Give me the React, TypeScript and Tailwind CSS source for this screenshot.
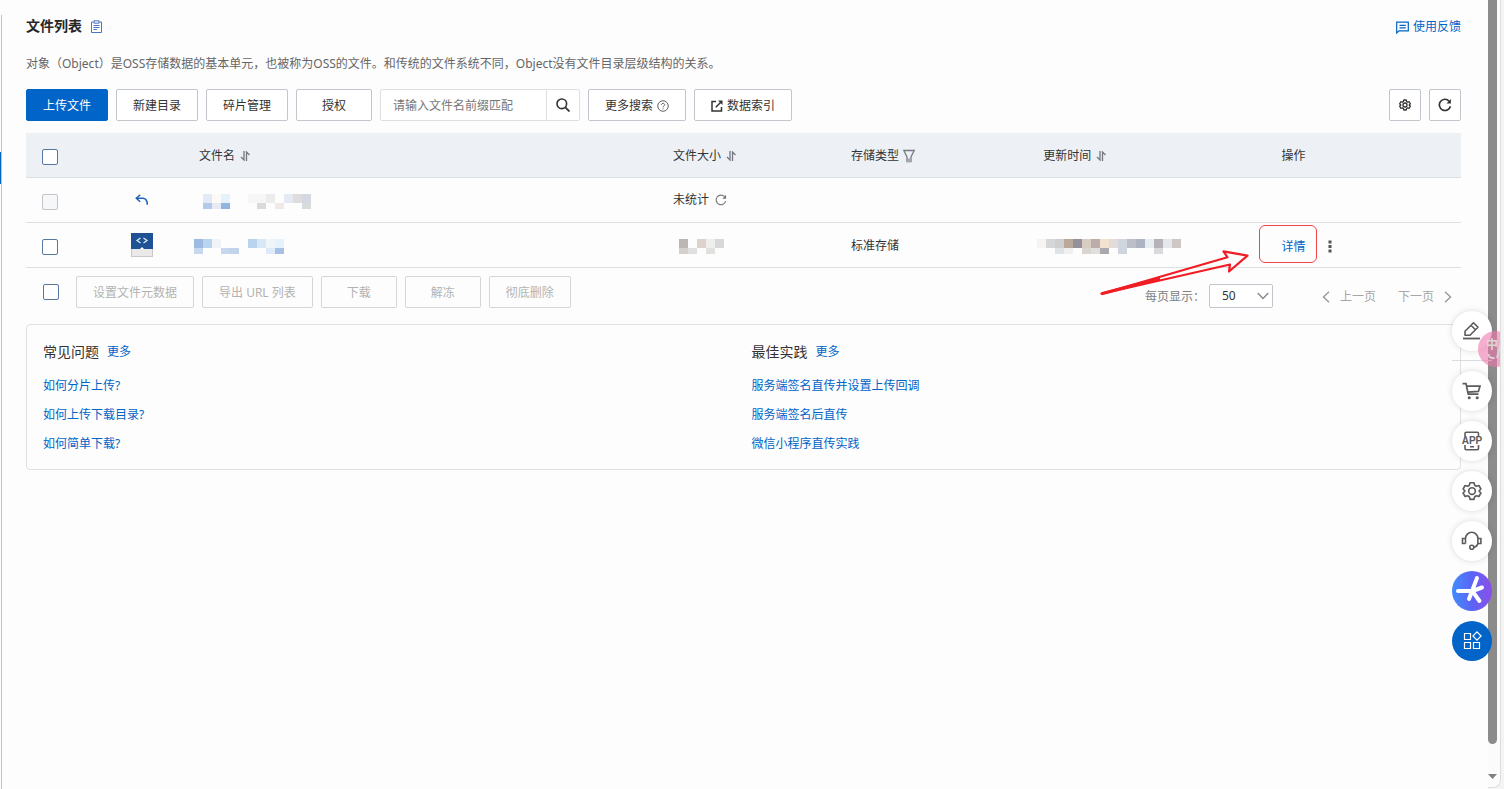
import type { ReactNode } from 'react';

const btn =
  'flex h-8 min-w-[76px] items-center justify-center gap-1 rounded-[2px] border border-[#c0c6cc] bg-white px-4 pt-0.5 whitespace-nowrap text-[#333]';
const btnDisabled =
  'flex h-8 min-w-[76px] items-center justify-center rounded-[2px] border border-[#d3d6da] px-4 pt-0.5 whitespace-nowrap text-[#b3b3b3]';
const iconBtn =
  'flex size-8 items-center justify-center rounded-[2px] border border-[#c0c6cc] bg-white text-[#333]';
const link = 'text-[#0064c8]';
const fab =
  'flex size-10 items-center justify-center rounded-full bg-white text-[#5c5c5c] shadow-[0_0_6px_rgba(0,0,0,0.14)]';

function Check({ label, disabled = false }: { label: string; disabled?: boolean }) {
  return (
    <input
      type="checkbox"
      aria-label={label}
      disabled={disabled}
      className="block size-4 appearance-none rounded-[2px] border border-[#56779f] bg-white checked:bg-[#0064c8] disabled:border-[#c3c5c9] disabled:bg-[#f6f7f9]"
    />
  );
}

function SortIcon() {
  return (
    <svg width="12" height="12" viewBox="0 0 12 12" fill="none" stroke="#74787e" strokeWidth="1.3" aria-hidden="true">
      <path d="M5 1V10L2 7" />
      <path d="M7.500 11V2L10.500 5" />
    </svg>
  );
}

function RefreshIcon({ size, width }: { size: number; width: number }) {
  return (
    <svg width={size} height={size} viewBox="0 0 14 14" fill="none" stroke="currentColor" strokeWidth={width} aria-hidden="true">
      <path d="M12.4 8.2A5.6 5.6 0 1 1 11.2 3.2" />
      <path d="M12.9 1V5.4H8.5Z" fill="currentColor" stroke="none" />
    </svg>
  );
}

function GearIcon({ size, width }: { size: number; width: number }) {
  return (
    <svg width={size} height={size} viewBox="0 0 24 24" fill="none" stroke="currentColor" strokeWidth={width} strokeLinejoin="round" aria-hidden="true">
      <path d="M9.6 2h4.8l.8 3.1 2 1.2 3.1-.9 2.4 4.2L20.4 12l2.3 2.4-2.4 4.2-3.1-.9-2 1.2-.8 3.1H9.6l-.8-3.1-2-1.2-3.1.9-2.4-4.2L3.6 12 1.300 9.600l2.400-4.200 3.100.9 2-1.200z" />
      <circle cx="12" cy="12" r="4" />
    </svg>
  );
}

type Cell = [col: number, row: number, color: string];

function Mosaic({ cells, cols }: { cells: Cell[]; cols: number }) {
  return (
    <svg width={cols * 9} height="16" shapeRendering="crispEdges" aria-hidden="true" className="block">
      {cells.map(([c, r, color]) => (
        <rect key={`${c}-${r}`} x={c * 9} y={r * 9} width="9" height={r ? 6 : 9} fill={color} />
      ))}
    </svg>
  );
}

const parentName: Cell[] = [
  [0, 0, '#e2ebf5'], [1, 0, '#fdf9f8'], [2, 0, '#e4f2fa'], [0, 1, '#b3cbe8'], [1, 1, '#e8eaf5'], [2, 1, '#8fb5e0'],
  [5, 0, '#f5f6f7'], [6, 0, '#f5f6f7'], [7, 0, '#ececec'], [9, 0, '#e3eaf4'], [10, 0, '#dfdcdd'], [11, 0, '#d4d9e1'],
  [6, 1, '#dcdad9'], [8, 1, '#f1e9e8'], [11, 1, '#dadbdd'],
];
const fileName: Cell[] = [
  [0, 0, '#9dbbe0'], [1, 0, '#b9d4ee'], [2, 0, '#f1f3f6'], [0, 1, '#c6d8ee'], [3, 1, '#c5d8ee'], [4, 1, '#c3d3ea'],
  [6, 0, '#b9d4ee'], [7, 0, '#d9e8f6'], [8, 0, '#f0f5fa'], [9, 0, '#e6f2fb'], [8, 1, '#dceafa'], [9, 1, '#a8c1e2'],
];
const fileSize: Cell[] = [
  [0, 0, '#bcb7b4'], [2, 0, '#dcd3ce'], [3, 0, '#eeeeec'], [4, 0, '#d8d8d9'], [0, 1, '#d6d0cd'], [1, 1, '#e0e0e1'], [3, 1, '#e2e1dd'],
];
const timeTop = ['#f6f3f1', '#d5d6d8', '#cfcfd2', '#b8a99b', '#949298', '#d8cdc3', '#bcadab', '#f2e2d0', '#e2dbda', '#cfd6de', '#bdbfc6', '#adb3c1', '#e8edf0', '#b5b3b9', '#e5e7ec', '#cdc8c3'];
const fileTime: Cell[] = [
  ...timeTop.map((c, i): Cell => [i, 0, c]),
  [2, 1, '#e0e3e6'], [3, 1, '#f0f0f1'], [5, 1, '#d9d5d0'], [6, 1, '#e2dfdd'], [7, 1, '#aaa9af'], [9, 1, '#cfd5dc'], [13, 1, '#d9d9de'],
];

function Th({ children, icon, className = '' }: { children: ReactNode; icon?: ReactNode; className?: string }) {
  return (
    <th scope="col" className={`border-b border-[#dcdfe3] px-4 pt-0.5 text-left font-normal ${className}`}>
      <span className="flex items-center gap-1">
        {children}
        {icon}
      </span>
    </th>
  );
}

function Td({ children, className = '' }: { children?: ReactNode; className?: string }) {
  return <td className={`border-b border-[#dedfe1] px-4 ${className}`}>{children}</td>;
}

function FileTable() {
  return (
    <table className="mt-3 w-full table-fixed border-separate border-spacing-0">
      <thead>
        <tr className="h-[45px] bg-[#edf1f6]">
          <th scope="col" className="w-[89px] border-b border-[#dcdfe3] px-4 pt-1">
            <Check label="全选" />
          </th>
          <th aria-label="类型" className="w-[68px] border-b border-[#dcdfe3]" />
          <Th icon={<SortIcon />} className="w-[33.03%]">文件名</Th>
          <Th icon={<SortIcon />} className="w-[12.4%]">文件大小</Th>
          <Th
            className="w-[13.4%]"
            icon={
              <svg width="12" height="14" viewBox="0 0 12 14" fill="none" stroke="#777b80" strokeWidth="1.3" aria-hidden="true">
                <path d="M0.8 1.500H11.200L8 8V12.500H4V8Z" />
                <path d="M4 9.500H8V13H4Z" fill="#a3a6aa" stroke="none" />
              </svg>
            }
          >
            存储类型
          </Th>
          <Th icon={<SortIcon />} className="w-[16.6%]">更新时间</Th>
          <Th>操作</Th>
        </tr>
      </thead>
      <tbody>
        <tr className="h-[45px]">
          <Td className="pt-1"><Check label="上级目录" disabled /></Td>
          <Td>
            <button type="button" aria-label="返回上级目录" className="ml-1 block text-[#1f63b8]">
              <svg width="14" height="12" viewBox="0 0 14 12" fill="none" stroke="currentColor" strokeWidth="1.5" aria-hidden="true">
                <path d="M5.200 0.800L1.300 4.300L5.200 7.800" />
                <path d="M1.300 4.300H7.500C10.500 4.300 12.300 6.400 12.300 10.800" />
              </svg>
            </button>
          </Td>
          <Td><div className="pt-1 pl-1"><Mosaic cells={parentName} cols={12} /></div></Td>
          <Td>
            <span className="flex items-center gap-1.5">
              未统计
              <button type="button" aria-label="统计" className="text-[#777]"><RefreshIcon size={12} width={1.3} /></button>
            </span>
          </Td>
          <Td />
          <Td />
          <Td />
        </tr>
        <tr className="h-[45px]">
          <Td className="pt-1"><Check label="选择文件" /></Td>
          <Td>
            <svg width="22" height="24" viewBox="0 0 22 24" fill="none" aria-hidden="true" className="block">
              <path d="M0 16H22V24H0Z" fill="#c9c9c9" />
              <path d="M1 16H21V23H1Z" fill="#e9e9e9" />
              <path d="M0 0H22V16H0Z" fill="#1f5195" />
              <path d="M11 14L13 16H9Z" fill="#fff" />
              <path d="M9.500 5L6 7.500L9.500 10M12.500 5L16 7.500L12.500 10" stroke="#e8eef7" strokeWidth="1.2" />
            </svg>
          </Td>
          <Td><div className="-ml-[5px] pt-1"><Mosaic cells={fileName} cols={10} /></div></Td>
          <Td><div className="pt-1 pl-1.5"><Mosaic cells={fileSize} cols={5} /></div></Td>
          <Td className="pt-0.5">标准存储</Td>
          <Td><div className="-ml-1.5 pt-1"><Mosaic cells={fileTime} cols={16} /></div></Td>
          <Td className="relative">
            <span className="flex items-center gap-[23px] pt-1">
              <a href="#detail" className={link}>详情</a>
              <button type="button" aria-label="更多操作" className="text-[#555]">
                <svg width="4" height="14" viewBox="0 0 4 14" fill="currentColor" aria-hidden="true" className="block">
                  <path d="M0.500 0.500H3.500V3.500H0.500ZM0.500 5H3.500V8H0.500ZM0.500 9.500H3.500V12.500H0.500Z" />
                </svg>
              </button>
            </span>
            <span className="pointer-events-none absolute top-0.5 -left-1.5 h-[38px] w-[58px] rounded-md border border-[#f0454b]" />
            <svg width="150" height="50" viewBox="1100 248 150 50" fill="none" stroke="#f01d24" strokeWidth="2.200" strokeLinejoin="round" aria-hidden="true" className="pointer-events-none absolute top-[25px] -left-[165px]">
              <path d="M1101.500 293.700L1227.500 257.300L1223.500 251.300L1247.500 255.700L1229 271.500L1230 264.500Z" />
              <path d="M1101.500 293.700L1160 278.500" strokeWidth="3" />
            </svg>
          </Td>
        </tr>
      </tbody>
    </table>
  );
}

function Faq({ title, items }: { title: string; items: string[] }) {
  return (
    <section>
      <div className="flex items-center gap-2 leading-5">
        <h2 className="text-[14px]">{title}</h2>
        <a href="#more" className={link}>更多</a>
      </div>
      <ul className="mt-[9px] leading-[29px]">
        {items.map((t) => (
          <li key={t}><a href="#doc" className={link}>{t}</a></li>
        ))}
      </ul>
    </section>
  );
}

function FloatingTools() {
  return (
    <nav aria-label="快捷工具" className="absolute top-[311px] right-3 flex flex-col gap-2.5">
      <div className="flex flex-col">
        <button type="button" aria-label="反馈" className={fab}>
          <svg width="20" height="20" viewBox="0 0 20 20" fill="none" stroke="currentColor" strokeWidth="1.600" strokeLinejoin="round" aria-hidden="true">
            <path d="M3 14.200V10.300L11.500 1.800L16 6.300L8 14.200ZM9 4.300L13.500 8.800" />
            <path d="M1 17.500H18" strokeWidth="1.800" />
          </svg>
        </button>
        <div className="mt-[9px] h-px bg-[#d9dde2]" />
      </div>
      <button type="button" aria-label="购物车" className={fab}>
        <svg width="20" height="20" viewBox="0 0 20 20" fill="none" stroke="currentColor" strokeWidth="1.700" aria-hidden="true">
          <path d="M0.500 2.600H4L6.200 13.200H16.500M4.600 5.200H18L16.400 10.400L5.700 11.200" />
          <circle cx="7.200" cy="16.800" r="1.500" fill="currentColor" stroke="none" />
          <circle cx="15.200" cy="16.800" r="1.500" fill="currentColor" stroke="none" />
        </svg>
      </button>
      <button type="button" aria-label="APP" className={`${fab} relative`}>
        <svg width="20" height="20" viewBox="0 0 20 20" fill="none" stroke="currentColor" strokeWidth="1.600" aria-hidden="true">
          <path d="M3 5.500V2.500Q3 1.300 4.200 1.300H15.300Q16.500 1.300 16.500 2.500V5.500M3 14V17.500Q3 18.700 4.200 18.700H15.300Q16.500 18.700 16.500 17.500V14M8 15.800H12" />
        </svg>
        <span className="absolute inset-0 flex items-center justify-center font-['Liberation_Sans',sans-serif] text-[10px] font-bold">APP</span>
      </button>
      <button type="button" aria-label="设置" className={fab}><GearIcon size={20} width={1.9} /></button>
      <button type="button" aria-label="客服" className={fab}>
        <svg width="22" height="20" viewBox="0 0 22 20" fill="none" stroke="currentColor" strokeWidth="1.600" aria-hidden="true">
          <path d="M4.500 12.500V7.500A6.200 6.200 0 0 1 16.900 7.500V12.500Q16.300 15.300 13 16.300" />
          <path d="M4.500 7.500H1.500V12.500H4.500M16.900 7.500H19.900V12.500H16.900" />
          <circle cx="10.800" cy="16.300" r="2" />
        </svg>
      </button>
      <button type="button" aria-label="AI 助手" className="flex size-10 items-center justify-center rounded-full bg-linear-to-r from-[#3f8cfa] via-[#5a63f6] to-[#8a4ee8]">
        <svg width="32" height="32" viewBox="0 0 32 32" fill="none" stroke="#fff" strokeWidth="4" strokeLinecap="round" aria-hidden="true">
          <path d="M2 16H15M21 3L13 24M15 16.500L26 12.500M17 17L23.500 26" />
        </svg>
      </button>
      <button type="button" aria-label="全部应用" className="flex size-10 items-center justify-center rounded-full bg-[#0064c8]">
        <svg width="20" height="20" viewBox="0 0 20 20" fill="none" stroke="#fff" strokeWidth="1.200" aria-hidden="true">
          <path d="M2.500 2.500H8.500V8.500H2.500ZM2.500 11.500H8.500V17.500H2.500ZM11.500 11.500H17.500V17.500H11.500ZM15 0.900L19.100 5L15 9.100L10.900 5Z" />
        </svg>
      </button>
    </nav>
  );
}

export default function App() {
  return (
    <div className="relative flex min-h-screen bg-[#fdfdfd] font-['Noto_Sans','Noto_Sans_CJK_SC',sans-serif] text-[12px] leading-5 text-[#333]">
      <div className="relative w-0.5 shrink-0 pt-[15px]">
        <div className="ml-px h-full bg-[#bfc2c6]" />
        <div className="absolute top-[152px] left-0 h-8 w-px bg-[#0064c8]" />
      </div>

      <main className="min-w-0 flex-1 pt-4 pr-[27px] pl-6">
        <header className="flex h-5 items-center justify-between">
          <div className="flex items-center gap-2">
            <h1 className="text-[14px] font-bold text-[#262626]">文件列表</h1>
            <svg width="13" height="13" viewBox="0 0 13 13" fill="none" stroke="#4a74c4" aria-hidden="true">
              <path d="M4 2H1.500V12.500H11.500V2H9" />
              <path d="M4 0.800H9V3.200H4Z" />
              <path d="M3.500 5.500H9.500M3.500 7.500H9.500M3.500 9.500H7" />
            </svg>
          </div>
          <a href="#feedback" className={`flex items-center gap-1 pt-0.5 ${link}`}>
            <svg width="13" height="13" viewBox="0 0 13 13" fill="none" stroke="currentColor" strokeWidth="1.200" aria-hidden="true">
              <path d="M0.700 12V1.200H12.300V9.800H3Z" />
              <path d="M3.500 4.300H9.800M3.500 6.800H9.800" />
            </svg>
            使用反馈
          </a>
        </header>

        <p className="mt-[18px] text-[#666]">
          对象（Object）是OSS存储数据的基本单元，也被称为OSS的文件。和传统的文件系统不同，Object没有文件目录层级结构的关系。
        </p>

        <div className="mt-[15px] flex justify-between">
          <div className="flex gap-2">
            <button type="button" className="h-8 rounded-[2px] border border-[#0064c8] bg-[#0064c8] px-4 pt-0.5 whitespace-nowrap text-white">上传文件</button>
            <button type="button" className={btn}>新建目录</button>
            <button type="button" className={btn}>碎片管理</button>
            <button type="button" className={btn}>授权</button>
            <form className="flex h-8 w-[200px] rounded-[2px] border border-[#dedfe2] bg-white" onSubmit={(e) => e.preventDefault()}>
              <input
                type="text"
                aria-label="文件名前缀"
                placeholder="请输入文件名前缀匹配"
                className="min-w-0 flex-1 px-3 pt-0.5 outline-none placeholder:text-[#777]"
              />
              <button type="submit" aria-label="搜索" className="flex w-[33px] items-center justify-center border-l border-[#dedfe2] text-[#333]">
                <svg width="14" height="14" viewBox="0 0 14 14" fill="none" stroke="currentColor" strokeWidth="1.600" aria-hidden="true">
                  <circle cx="5.800" cy="5.800" r="4.800" />
                  <path d="M9.300 9.300L13.500 13.500" strokeWidth="1.800" />
                </svg>
              </button>
            </form>
            <button type="button" className={btn}>
              更多搜索
              <svg width="12" height="12" viewBox="0 0 13 13" fill="none" stroke="#555" aria-hidden="true">
                <circle cx="6.500" cy="6.500" r="5.700" />
                <path d="M4.700 5.300C4.700 3 8.300 3 8.300 5.200C8.300 6.400 6.500 6.400 6.500 7.900" />
                <path d="M6.500 8.900V10" />
              </svg>
            </button>
            <button type="button" className={btn}>
              <svg width="12" height="12" viewBox="0 0 12 12" fill="none" stroke="currentColor" strokeWidth="1.500" aria-hidden="true">
                <path d="M5 1.500H1V11H10.500V7" />
                <path d="M4.800 7.300L10 2" />
                <path d="M7 0.500H11.500V5Z" fill="currentColor" stroke="none" />
              </svg>
              数据索引
            </button>
          </div>
          <div className="flex gap-2">
            <button type="button" aria-label="列设置" className={iconBtn}><GearIcon size={12} width={2.6} /></button>
            <button type="button" aria-label="刷新" className={iconBtn}><RefreshIcon size={14} width={1.7} /></button>
          </div>
        </div>

        <FileTable />

        <div className="flex items-end justify-between pt-2">
          <div className="flex items-center gap-2">
            <div className="mr-[9px] ml-[17px]"><Check label="全选本页" /></div>
            <button type="button" disabled className={btnDisabled}>设置文件元数据</button>
            <button type="button" disabled className={btnDisabled}>导出 URL 列表</button>
            <button type="button" disabled className={btnDisabled}>下载</button>
            <button type="button" disabled className={btnDisabled}>解冻</button>
            <button type="button" disabled className={btnDisabled}>彻底删除</button>
          </div>
          <div className="flex h-6 items-center pr-[9px] text-[#a6a6a6]">
            <label htmlFor="page-size" className="mr-1 pt-0.5 text-[#808080]">每页显示：</label>
            <div className="relative">
              <select id="page-size" defaultValue="50" className="block h-6 w-16 appearance-none rounded-[2px] border border-[#c0c6cc] bg-white pl-3 text-[#333]">
                <option>20</option>
                <option>50</option>
                <option>100</option>
              </select>
              <svg width="12" height="8" viewBox="0 0 12 8" fill="none" stroke="#888" strokeWidth="1.400" aria-hidden="true" className="pointer-events-none absolute top-2 right-1">
                <path d="M0.700 1L6 6.500L11.300 1" />
              </svg>
            </div>
            <button type="button" disabled className="ml-[49px] flex items-center gap-2.5 pt-0.5">
              <svg width="8" height="12" viewBox="0 0 8 12" fill="none" stroke="#999" strokeWidth="1.400" aria-hidden="true"><path d="M7 0.700L1.500 6L7 11.300" /></svg>
              上一页
            </button>
            <button type="button" disabled className="ml-[22px] flex items-center gap-2.5 pt-0.5">
              下一页
              <svg width="8" height="12" viewBox="0 0 8 12" fill="none" stroke="#999" strokeWidth="1.400" aria-hidden="true"><path d="M1 0.700L6.500 6L1 11.300" /></svg>
            </button>
          </div>
        </div>

        <div className="mt-4 grid grid-cols-2 gap-4 rounded border border-[#dfe0e2] px-4 pt-[17px] pb-[11px]">
          <Faq title="常见问题" items={['如何分片上传?', '如何上传下载目录?', '如何简单下载?']} />
          <Faq title="最佳实践" items={['服务端签名直传并设置上传回调', '服务端签名后直传', '微信小程序直传实践']} />
        </div>
      </main>

      <div aria-hidden="true" className="flex w-4 shrink-0 bg-[#f4f4f4]">
        <div className="mb-px flex w-[13px] flex-col rounded-br-lg border-r border-b border-[#dedede] bg-[#fbfbfb]">
          <div className="w-[9px] flex-1 rounded-b-full bg-[#8b8b8b]" />
          <svg width="9" height="5" viewBox="0 0 9 5" fill="#808080" className="mt-[30px] mb-[8px]"><path d="M0 0H9L4.500 5Z" /></svg>
        </div>
      </div>

      <FloatingTools />

      <div className="absolute top-[331px] right-1 h-9 w-[22px] overflow-hidden">
        <button type="button" aria-label="输入法" className="relative size-9 rounded-full bg-[#ee78ac]/60 text-left text-[#dcd3d7]">
          <span className="absolute top-1 left-2 text-[12px] leading-5 font-bold">中</span>
          <svg width="24" height="30" viewBox="0 0 24 30" fill="none" stroke="currentColor" strokeWidth="2" aria-hidden="true" className="absolute top-0 left-0">
            <path d="M10.500 23Q10.500 27.500 16.500 27" />
            <path d="M23 12L19 27" />
          </svg>
        </button>
      </div>
    </div>
  );
}
